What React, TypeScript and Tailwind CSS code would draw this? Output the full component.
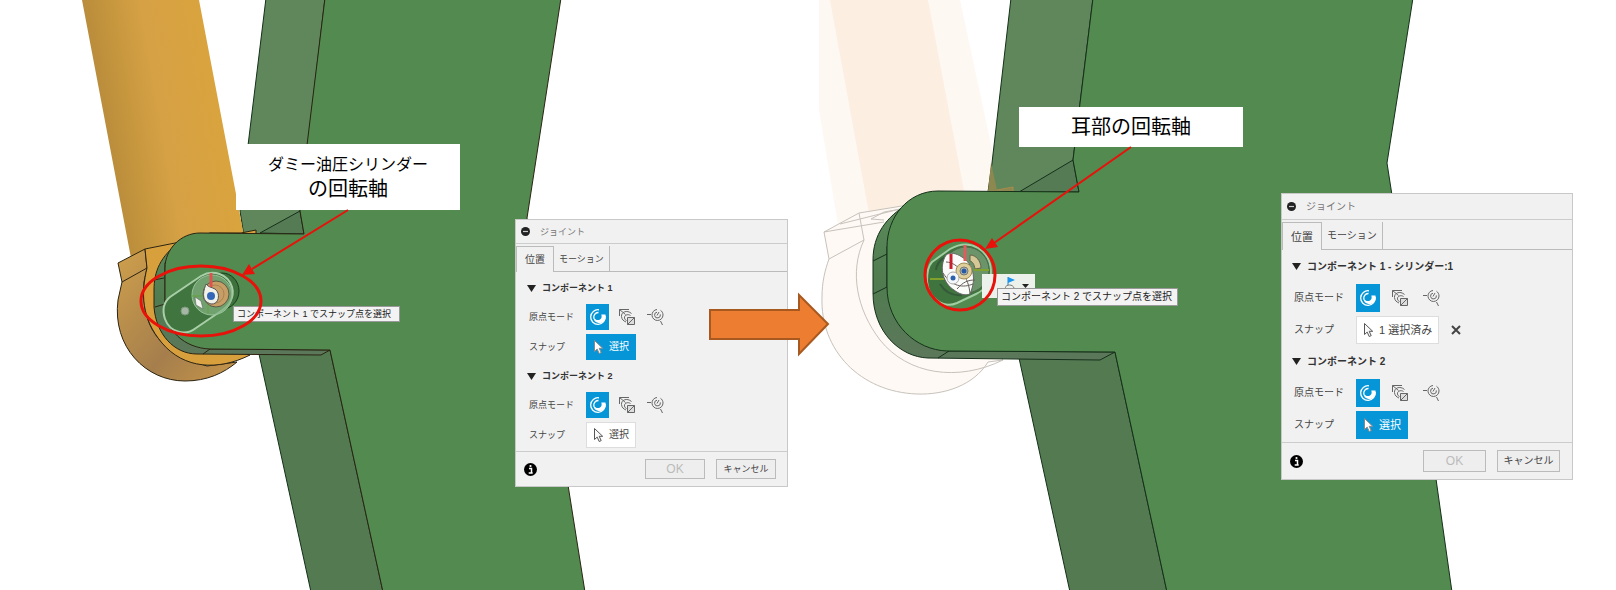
import { useState } from 'react';

const uiFont = "font-['Liberation_Sans','Noto_Sans_CJK_JP',sans-serif]";

function PickIcon({ active }: { active?: boolean }) {
  return (
    <svg width="11" height="16" viewBox="0 0 11 16" aria-hidden="true">
      <path
        d="M1.5 1.5v11l2.7-2.4 2 4.4 2-.9-2-4.3h3.5z"
        fill={active ? '#fff' : '#fafafa'}
        stroke={active ? '#8a8a8a' : '#555'}
        strokeWidth="1"
      />
    </svg>
  );
}

function SimpleOriginIcon() {
  return (
    <svg width="18" height="18" viewBox="0 0 18 18" fill="none" aria-hidden="true">
      <path d="M10 1.800A7.300 7.300 0 1 0 16.200 8" stroke="#fff" strokeWidth="1.300" />
      <path d="M9.500 4.500A4.500 4.500 0 0 0 5 10.500" stroke="#fff" strokeWidth="1.300" />
      <path d="M16.500 6.500C17.500 12 14 15.500 9.500 15 6.500 14.500 4.500 12.500 4.300 9 6 12 9 12.800 11 11.500 12.800 10.300 13 8.500 12.300 6.500z" fill="#fff" />
    </svg>
  );
}

function TwoFacesIcon() {
  return (
    <svg width="18" height="18" viewBox="0 0 18 18" fill="none" stroke="#666" aria-hidden="true">
      <path d="M1.500 8V1.500H11" />
      <path d="M13.500 5.500C9 1.500 3 4 3.500 8.500c.3 3 2 4.500 4.500 5.500" />
      <path d="M12.500 7.500c-3-2-6.500 0-6 2.500.2 1.500 1 2 2 2.500M1.500 1.500l6 5" />
      <path d="M9.500 9.500h7v7h-7z" fill="#ddd" />
      <path d="m9.500 16.500 7-7" />
    </svg>
  );
}

function IntersectionIcon() {
  return (
    <svg width="18" height="18" viewBox="0 0 18 18" fill="none" stroke="#666" aria-hidden="true">
      <path d="M0 6.500h4M13.500 13l2 4" />
      <path d="M10 1.500a5.500 5.500 0 1 0 6 5.500c0-2-1-3.800-2.500-4.700" />
      <path d="M10 4.200a2.900 2.900 0 1 0 3.300 2.200M10 7.500l2-3.500" />
    </svg>
  );
}

const originModes = [
  { id: 'simple', label: 'シンプル', Icon: SimpleOriginIcon },
  { id: 'faces', label: '2 つの面の間', Icon: TwoFacesIcon },
  { id: 'edges', label: '2 つのエッジの交差', Icon: IntersectionIcon },
];

interface SectionProps {
  title: string;
  snap: string;
  active?: boolean;
  clearable?: boolean;
  large?: boolean;
}

function ComponentSection({ title, snap, active, clearable, large }: SectionProps) {
  const [mode, setMode] = useState('simple');
  const row = large ? 'h-8' : 'h-[30px]';
  const label = large ? 'w-[62px]' : 'w-[57px]';

  return (
    <section className={large ? 'pl-3' : 'pl-[13px]'}>
      <h3 className={`-ml-[2px] flex items-center gap-[6px] font-bold text-[#333] ${large ? 'h-[31px]' : 'h-[28px]'}`}>
        <svg width="9" height="7" viewBox="0 0 9 7" aria-hidden="true">
          <path d="M0 0h9L4.500 7z" fill="#222" />
        </svg>
        {title}
      </h3>
      <div className={`flex items-center ${row}`}>
        <span className={label}>原点モード</span>
        <div className={`flex ${large ? 'gap-2' : 'gap-[6px]'}`}>
          {originModes.map(({ id, label, Icon }) => (
            <button
              key={id}
              onClick={() => setMode(id)}
              aria-label={label}
              aria-pressed={mode === id}
              className={`flex items-center justify-center ${large ? 'h-7 w-6' : 'h-[26px] w-[23px]'} ${mode === id ? 'bg-[#0696d7]' : ''}`}
            >
              <Icon />
            </button>
          ))}
        </div>
      </div>
      <div className={`flex items-center ${row}`}>
        <span className={label}>スナップ</span>
        <button
          className={`flex items-center gap-[5px] border px-[6px] ${large ? 'h-7 text-[11px]' : 'h-[26px] text-[10px]'} ${
            active ? 'border-[#0696d7] bg-[#0696d7] text-white' : 'border-[#ddd] bg-white'
          }`}
        >
          <PickIcon active={active} />
          {snap}
        </button>
        {clearable && (
          <button aria-label="選択を解除" className="ml-3">
            <svg width="10" height="10" viewBox="0 0 10 10" aria-hidden="true">
              <path d="m1 1 8 8M9 1 1 9" stroke="#444" strokeWidth="2" />
            </svg>
          </button>
        )}
      </div>
    </section>
  );
}

interface JointDialogProps {
  className: string;
  sections: SectionProps[];
  large?: boolean;
}

function JointDialog({ className, sections, large }: JointDialogProps) {
  const [tab, setTab] = useState('位置');
  const button = `border border-[#bbb] bg-[#eee] ${large ? 'h-[22px] w-[63px]' : 'h-5 w-[60px]'}`;

  return (
    <div
      role="dialog"
      aria-label="ジョイント"
      className={`absolute border border-[#c8c8c8] bg-[#f1f1f1] leading-4 text-[#444] ${large ? 'text-[10px]' : 'text-[9px]'} ${className}`}
    >
      <header className={`flex items-center gap-[10px] border-b border-[#ccc] pl-[5px] text-[#777] ${large ? 'h-[26px]' : 'h-6'}`}>
        <svg width="9" height="9" viewBox="0 0 9 9" aria-hidden="true">
          <circle cx="4.500" cy="4.500" r="4.500" fill="#222" />
          <path d="M2 4.500h5" stroke="#ccc" strokeWidth="1.200" />
        </svg>
        <h2>ジョイント</h2>
      </header>
      <div role="tablist" className={`flex pt-[2px] ${large ? 'h-[30px]' : 'h-7'}`}>
        {['位置', 'モーション'].map((name) => (
          <button
            key={name}
            role="tab"
            aria-selected={tab === name}
            onClick={() => setTab(name)}
            className={`border-r border-[#bbb] ${
              name === '位置' ? (large ? 'px-2 text-[11px]' : 'px-2 text-[10px]') : 'px-[5px]'
            } ${tab === name ? 'border-t border-l' : 'border-b'}`}
          >
            {name}
          </button>
        ))}
        <div className="flex-1 border-b border-[#bbb]" />
      </div>
      <div className={large ? 'pt-[1px] pb-[1px]' : 'pt-[2px] pb-[1px]'}>
        {sections.map((section) => (
          <ComponentSection key={section.title} {...section} large={large} />
        ))}
      </div>
      <footer className={`flex items-center gap-[11px] border-t border-[#ccc] pl-2 ${large ? 'h-[37px] pr-3' : 'h-[35px] pr-[11px]'}`}>
        <svg width="13" height="13" viewBox="0 0 13 13" className="mr-auto" aria-hidden="true">
          <circle cx="6.500" cy="6.500" r="6.500" fill="#000" />
          <path d="M5 5.500h2.500V10M4.700 10h4" stroke="#fff" strokeWidth="1.500" fill="none" />
          <circle cx="6.500" cy="3" r="1.100" fill="#fff" />
        </svg>
        <button disabled className={`${button} text-xs text-[#bbb]`}>
          OK
        </button>
        <button className={button}>キャンセル</button>
      </footer>
    </div>
  );
}

function Scene() {
  return (
    <svg viewBox="0 0 1616 590" className="block h-auto w-full" aria-hidden="true">
      <defs>
        <linearGradient id="rod" gradientUnits="userSpaceOnUse" x1="100" y1="112" x2="216" y2="92">
          <stop offset="0" stopColor="#b98c3c" />
          <stop offset="0.2" stopColor="#c4953d" />
          <stop offset="0.5" stopColor="#d6a145" />
          <stop offset="1" stopColor="#d9a33e" />
        </linearGradient>
        <linearGradient id="collar" x1="0" y1="0" x2="1" y2="1">
          <stop offset="0" stopColor="#cfa04c" />
          <stop offset="0.600" stopColor="#a57e4c" />
          <stop offset="1" stopColor="#c79648" />
        </linearGradient>
        <linearGradient id="side" x1="0" y1="0" x2="0" y2="1">
          <stop offset="0" stopColor="#5c8a5a" />
          <stop offset="0.500" stopColor="#507c50" />
          <stop offset="1" stopColor="#5c775a" />
        </linearGradient>
      </defs>

      {/* left figure: arm */}
      <g stroke="#15301a" strokeWidth="1">
        <path d="M266 -2 240 211 244 236H304L300 211 325 -2z" fill="#60875b" />
        <path d="M260 233 300 211 304 234z" fill="#557b55" />
        <path d="M259 354 311 592H383L330 350z" fill="#547a52" />
      </g>
      <path d="M82 0H199L244 236 180 243 145 249 131 258z" fill="url(#rod)" />
      <g stroke="#2b2413" strokeWidth="1">
        <path
          d="M118 263 145 249 147 268 144 282C141 325 157 352 207 366L237 362C224 373 207 381 185 381C146 381 112 347 118 300L122 282z"
          fill="url(#collar)"
        />
        <path d="M122 282 147 268" fill="none" />
        <path
          d="M145 249 180 242 210 233H241L256 230V234L230 350 250 355C218 371 184 369 162 343C141 318 141 293 147 268z"
          fill="#d8a03c"
        />
        <path
          d="M180 242C160 256 154 272 154 290V307C156 334 174 354 197 354L321 355 330 350 210 349 165 307V263z"
          fill="url(#side)"
        />
        <path d="M154 280 164 278M155 307 165 304M203 354 210 349" />
        <path
          d="M325 -2 307 145 300 211 304 234 200 233C181 233 165 249 165 268V307C165 330 184 348 210 349L330 350 383 592H585L568 485 540 300 527 218 561 -2z"
          fill="#528a4f"
        />
      </g>
      {/* slot and snap glyph */}
      <ellipse cx="222" cy="291" rx="17" ry="18" fill="#3f713d" stroke="#173d19" />
      <path
        d="M170 297 201 276C213 269 228 274 232 287 235 298 228 307 221 311L196 328C186 336 170 333 165 319 162 310 164 302 170 297z"
        fill="#41753f"
        stroke="#a9cfa8"
        strokeWidth="2"
      />
      <circle cx="212" cy="295" r="20" fill="#84b384" fillOpacity="0.700" stroke="#98c29a" />
      <path d="M191 296h14M208 305v9" stroke="#65a33d" />
      <circle cx="216" cy="294" r="13" fill="#c79e66" stroke="#5c5b43" />
      <circle cx="215" cy="294" r="9" fill="none" stroke="#a98350" />
      <path d="M206 284C203 292 201 301 211 304 219 305 221 293 215 289 211 287 208 287 206 284z" fill="#f2f1e8" stroke="#555" />
      <circle cx="211" cy="296" r="4" fill="#3567b9" />
      <path d="m195 297 6 4 2 8-7-4z" fill="#f3f4ee" stroke="#555" strokeWidth="0.500" />
      <path d="M211 273v14" stroke="#e0524f" strokeWidth="3" />
      <circle cx="185" cy="311" r="4" fill="#a6b8a5" stroke="#7c987b" />

      {/* right figure: faded cylinder */}
      <path d="M819 0H960L1001 191 865 220 838 225 819 110z" fill="#fef8f3" />
      <path d="M830 0H928L964 191 870 219z" fill="#fcefe2" />
      <g stroke="#c7c2bb" strokeWidth="1" fill="none">
        <path
          d="M824 232 859 213 908 205 1003 360 988 362C974 385 945 395 917 394C860 392 820 350 822 297C822 282 825 270 829 259z"
          fill="#fef9f4"
        />
        <path d="M859 213 864 240 829 259M824 232 884 222M840 224 900 209M871 219 884 212 901 209M871 219 884 220" />
        <path d="M864 240C849 272 857 310 880 340C908 375 958 382 1003 360" />
      </g>

      {/* right figure: arm */}
      <g stroke="#15301a" strokeWidth="1">
        <path d="M1011 -2 992 163 988 192H1079L1073 160 1093 -2z" fill="#60875b" />
        <path d="M1019 192 1073 160 1079 192z" fill="#557b55" />
        <path d="M1019 358 1070 592H1167L1115 352z" fill="#547a52" />
        <path
          d="M908 204C886 217 873 235 873 260V293C873 332 900 357 928 358L1100 360 1115 352 947 351 887 287V247z"
          fill="url(#side)"
        />
        <path d="M873 261 887 254M873 294 887 287M938 358 949 351" />
        <path
          d="M1093 -2 1073 160 1079 192 938 191C908 191 887 217 887 247V287C887 324 916 350 947 351L1115 352 1167 592H1452L1436 479 1387 163 1413 -2z"
          fill="#528a4f"
        />
      </g>
      <path d="M991 163 997 190 1013 187V191H988z" fill="#8d8750" />
      <path d="M997 190 1013 187V191" fill="none" stroke="#a98b4b" />
      <path
        d="M932 262 950 249C971 237 990 251 991 271 991 285 984 290 976 294L957 303C943 309 928 298 927 281 927 273 928 266 932 262z"
        fill="#3f743e"
        stroke="#a2cca1"
        strokeWidth="2"
      />
      <circle cx="966" cy="270" r="23" fill="#6b946a" stroke="#4c6b4a" />
      <path d="M940 284C945 292 953 296 962 295M936 270C937 263 940 260 944 258" fill="none" stroke="#35593a" strokeWidth="2" />
      <path d="M970 255C976 255 981 261 981 268L975 269C974 264 973 262 970 261z" fill="#d5c796" stroke="#666448" />
      <path d="M930 279h14M974 270h15" stroke="#80a12c" strokeWidth="2" />
      <path d="M946 255C938 268 944 284 954 290 959 294 965 296 970 294 977 278 973 264 962 257 956 253 950 252 946 255z" fill="#fbfbf9" stroke="#666" />
      <path d="M946 262C958 262 969 278 970 294M943 273C952 287 963 288 973 284M957 289C963 282 968 280 975 280" fill="none" stroke="#655f58" />
      <circle cx="964" cy="271" r="8" fill="#dfcf9b" stroke="#a18d55" />
      <circle cx="964" cy="271" r="4" fill="#b9bfae" stroke="#777" />
      <circle cx="964" cy="271" r="2.500" fill="#285ba4" />
      <circle cx="953" cy="278" r="6" fill="#f5f7f9" stroke="#aaa" />
      <circle cx="953" cy="278" r="2.500" fill="#2c61ae" />
      <path d="M951 254v15" stroke="#c8202c" strokeWidth="3" />
      <path d="M965 245v16" stroke="#df5c5e" strokeWidth="3" />
    </svg>
  );
}

function Annotations() {
  return (
    <svg viewBox="0 0 1616 590" className="pointer-events-none absolute inset-0 h-auto w-full" aria-hidden="true">
      <g fill="none" stroke="#e8120b">
        <ellipse cx="201" cy="301" rx="60" ry="35" strokeWidth="3" />
        <circle cx="960" cy="275" r="35" strokeWidth="3" />
        <path d="M348 210 252 269M1131 147 994 243" strokeWidth="2" />
      </g>
      <path d="M242 275 249 264 255 274zM985 249 992 238 998 247z" fill="#e8120b" />
      <path d="M710 310H799V295L828 324 799 354V339H710z" fill="#ed7d31" stroke="#a8591f" strokeWidth="2" />
    </svg>
  );
}

const labelClass = 'absolute flex flex-col items-center justify-center bg-white text-black';
const tipClass = 'absolute border border-[#999] bg-[#f3f3f3] pl-[3px] whitespace-nowrap text-[#222]';

export default function App() {
  return (
    <main className={`relative w-full overflow-hidden bg-white ${uiFont}`}>
      <Scene />

      <p className={`${labelClass} top-[calc(100%*144/590)] left-[calc(100%*236/1616)] h-[66px] w-56 text-center`}>
        <span className="text-base leading-6">ダミー油圧シリンダー</span>
        <span className="text-xl leading-6">の回転軸</span>
      </p>
      <p className={`${labelClass} top-[calc(100%*107/590)] left-[calc(100%*1019/1616)] h-10 w-56 text-xl leading-6`}>
        耳部の回転軸
      </p>

      <div className="absolute top-[calc(100%*274/590)] left-[calc(100%*982/1616)] flex h-6 w-[53px] items-start justify-end gap-[6px] bg-[#edf1ec] pt-[3px] pr-[6px]">
        <svg width="11" height="12" viewBox="0 0 11 12" aria-hidden="true">
          <path d="M3 0v8" stroke="#158ce0" />
          <path d="m3 0 7 3-7 3z" fill="#1c95ec" />
          <path d="M0 11c1-4 8-4 9 0" fill="none" stroke="#777" />
        </svg>
        <svg width="7" height="4" viewBox="0 0 7 4" className="mt-[7px]" aria-hidden="true">
          <path d="M0 0h7L3.500 4z" fill="#222" />
        </svg>
      </div>
      <div role="tooltip" className={`${tipClass} top-[calc(100%*306/590)] left-[calc(100%*233/1616)] pr-2 text-[9px] leading-[14px]`}>
        コンポーネント 1 でスナップ点を選択
      </div>
      <div role="tooltip" className={`${tipClass} top-[calc(100%*288/590)] left-[calc(100%*997/1616)] pr-[5px] text-[10px] leading-4`}>
        コンポーネント 2 でスナップ点を選択
      </div>

      <JointDialog
        className="top-[calc(100%*219/590)] left-[calc(100%*515/1616)] w-[273px]"
        sections={[
          { title: 'コンポーネント 1', snap: '選択', active: true },
          { title: 'コンポーネント 2', snap: '選択' },
        ]}
      />
      <JointDialog
        large
        className="top-[calc(100%*193/590)] left-[calc(100%*1281/1616)] w-[292px]"
        sections={[
          { title: 'コンポーネント 1 - シリンダー:1', snap: '1 選択済み', clearable: true },
          { title: 'コンポーネント 2', snap: '選択', active: true },
        ]}
      />

      <Annotations />
    </main>
  );
}
